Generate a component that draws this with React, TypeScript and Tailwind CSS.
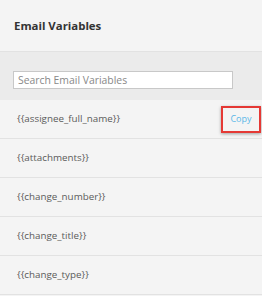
import React from 'react';

const variables = [
  '{{assignee_full_name}}',
  '{{attachments}}',
  '{{change_number}}',
  '{{change_title}}',
  '{{change_type}}',
];

export default function App() {
  return (
    <div className="w-[262px] h-[296px] overflow-hidden bg-[#f4f4f4] font-['Open_Sans',sans-serif]">
      {/* Header */}
      <div className="h-[52px] flex items-center pl-[14px] border-b border-[#e2e2e2]">
        <h2 className="text-[11.4px] font-bold text-[#333]">Email Variables</h2>
      </div>

      {/* Search */}
      <div className="h-[48px] bg-[#ebebeb] pt-[14px] pl-[13px]">
        <input
          type="text"
          placeholder="Search Email Variables"
          className="w-[220px] h-[18px] bg-white border border-[#c8c8c8] px-[4px] text-[10.4px] text-[#555] placeholder:text-[#888] outline-none"
        />
      </div>

      {/* Variable list */}
      <ul>
        {variables.map((v, i) => (
          <li
            key={v}
            className="h-[39px] flex items-center justify-between pl-[17px] border-b border-[#e2e2e2] text-[9.8px] text-[#5a5a5a]"
          >
            <span>{v}</span>
            {i === 0 && (
              <span className="mr-[1px] w-[40px] h-[27px] flex items-center justify-center border-2 border-[#e53935] shadow-[0_1px_3px_rgba(0,0,0,0.35)] text-[9px] text-[#5bb8e8]">
                Copy
              </span>
            )}
          </li>
        ))}
      </ul>
    </div>
  );
}
